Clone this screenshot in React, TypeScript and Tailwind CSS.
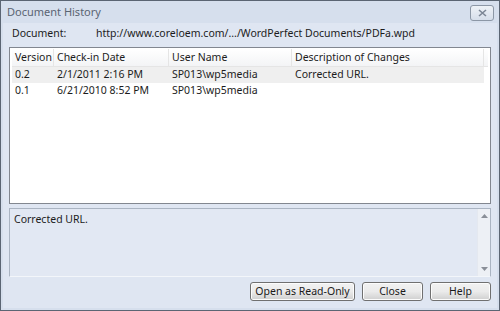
import { useState } from 'react'

interface Version {
  version: string
  checkIn: string
  user: string
  description: string
}

const versions: Version[] = [
  { version: '0.2', checkIn: '2/1/2011 2:16 PM', user: 'SP013\\wp5media', description: 'Corrected URL.' },
  { version: '0.1', checkIn: '6/21/2010 8:52 PM', user: 'SP013\\wp5media', description: '' },
]

function DialogButton({ label, width }: { label: string; width: string }) {
  return (
    <button
      className={`${width} h-[19px] rounded-[3px] border border-[#707070] bg-gradient-to-b from-[#f2f2f2] via-[#ebebeb] to-[#cfcfcf] text-[10.5px] text-[#1a1a1a] leading-none shadow-[inset_0_0_0_1px_#fcfcfc]`}
    >
      {label}
    </button>
  )
}

export default function App() {
  const [selected, setSelected] = useState(0)

  return (
    <div
      className="w-[500px] h-[311px] flex flex-col bg-[#dfe6f2] border border-[#5b6573] text-[10.5px] text-[#1c1c1c] overflow-hidden"
      style={{ fontFamily: '"Noto Sans", "DejaVu Sans", sans-serif' }}
    >
      {/* Title bar */}
      <div className="h-[22px] shrink-0 flex items-center justify-between pl-[6px] pr-[5px] bg-[#d6dfed]">
        <span className="text-[11px] text-[#5a6473]">Document History</span>
        <div className="w-[24px] h-[16px] mt-[1px] flex items-center justify-center rounded-[3px] border border-[#8c97a6] bg-gradient-to-b from-[#eef2f7] to-[#d6deea]">
          <svg width="9" height="8" viewBox="0 0 9 8">
            <path d="M1 1 L8 7 M8 1 L1 7" stroke="#7b8594" strokeWidth="1.6" fill="none" />
          </svg>
        </div>
      </div>

      <div className="flex-1 flex flex-col px-[6px] pb-[5px] border-x-[2px] border-b-[2px] border-[#d6dfed]">
        {/* Document path */}
        <div className="h-[22px] flex items-center">
          <span className="w-[87px] shrink-0 pl-[3px]">Document:</span>
          <span>http://www.coreloem.com/.../WordPerfect Documents/PDFa.wpd</span>
        </div>

        {/* Version list */}
        <div className="h-[157px] mt-[2px] bg-white border border-[#828790] px-[2px] pt-[1px]">
          <div className="flex h-[18px] items-center bg-gradient-to-b from-white to-[#f3f4f6] border-b border-[#e5e5e5]">
            <div className="w-[42px] pl-[3px] border-r border-[#e5e5e5] h-full flex items-center">Version</div>
            <div className="w-[115px] pl-[3px] border-r border-[#e5e5e5] h-full flex items-center">Check-in Date</div>
            <div className="w-[123px] pl-[3px] border-r border-[#e5e5e5] h-full flex items-center">User Name</div>
            <div className="w-[192px] pl-[3px] border-r border-[#e5e5e5] h-full flex items-center">Description of Changes</div>
          </div>
          {versions.map((v, i) => (
            <div
              key={v.version}
              onClick={() => setSelected(i)}
              className={`flex h-[16px] items-center w-[472px] ${selected === i ? 'bg-[#efefef]' : ''}`}
            >
              <div className="w-[42px] pl-[3px]">{v.version}</div>
              <div className="w-[115px] pl-[3px]">{v.checkIn}</div>
              <div className="w-[123px] pl-[3px]">{v.user}</div>
              <div className="w-[192px] pl-[3px]">{v.description}</div>
            </div>
          ))}
        </div>

        {/* Description text area */}
        <div className="h-[69px] mt-[4px] flex bg-[#e2e8f3] border border-[#aab4c2] border-b-[#f3f6fa]">
          <div className="flex-1 pl-[4px] pt-[3px]">{versions[selected].description}</div>
          <div className="w-[13px] flex flex-col items-center justify-between py-[5px] bg-[#edf0f5] border-l border-[#e4e8ef]">
            <svg width="7" height="4" viewBox="0 0 7 4">
              <path d="M0 4 L3.5 0 L7 4 Z" fill="#8a8f98" />
            </svg>
            <svg width="7" height="4" viewBox="0 0 7 4">
              <path d="M0 0 L3.5 4 L7 0 Z" fill="#8a8f98" />
            </svg>
          </div>
        </div>

        {/* Buttons */}
        <div className="flex-1 flex items-center justify-end gap-[7px] pt-[3px]">
          <DialogButton label="Open as Read-Only" width="w-[105px]" />
          <DialogButton label="Close" width="w-[61px]" />
          <DialogButton label="Help" width="w-[61px]" />
        </div>
      </div>
    </div>
  )
}
